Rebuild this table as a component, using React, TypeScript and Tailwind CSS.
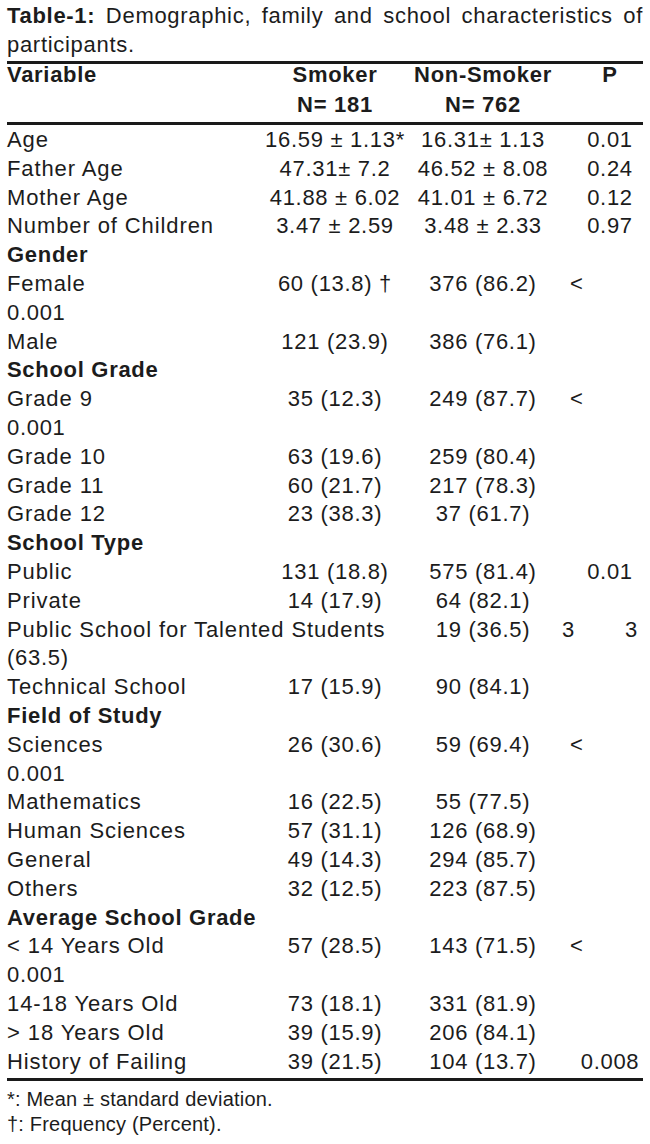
import React from 'react';

type Row =
  | { kind: 'head'; label: string }
  | { kind: 'line'; label: string }
  | { kind: 'data'; label: string; smoker: string; non: string; p?: string; lt?: boolean };

const ROWS: Row[] = [
  { kind: 'data', label: 'Age', smoker: '16.59 ± 1.13*', non: '16.31± 1.13', p: '0.01' },
  { kind: 'data', label: 'Father Age', smoker: '47.31± 7.2', non: '46.52 ± 8.08', p: '0.24' },
  { kind: 'data', label: 'Mother Age', smoker: '41.88 ± 6.02', non: '41.01 ± 6.72', p: '0.12' },
  { kind: 'data', label: 'Number of Children', smoker: '3.47 ± 2.59', non: '3.48 ± 2.33', p: '0.97' },
  { kind: 'head', label: 'Gender' },
  { kind: 'data', label: 'Female', smoker: '60 (13.8) †', non: '376 (86.2)', lt: true },
  { kind: 'line', label: '0.001' },
  { kind: 'data', label: 'Male', smoker: '121 (23.9)', non: '386 (76.1)' },
  { kind: 'head', label: 'School Grade' },
  { kind: 'data', label: 'Grade 9', smoker: '35 (12.3)', non: '249 (87.7)', lt: true },
  { kind: 'line', label: '0.001' },
  { kind: 'data', label: 'Grade 10', smoker: '63 (19.6)', non: '259 (80.4)' },
  { kind: 'data', label: 'Grade 11', smoker: '60 (21.7)', non: '217 (78.3)' },
  { kind: 'data', label: 'Grade 12', smoker: '23 (38.3)', non: '37 (61.7)' },
  { kind: 'head', label: 'School Type' },
  { kind: 'data', label: 'Public', smoker: '131 (18.8)', non: '575 (81.4)', p: '0.01' },
  { kind: 'data', label: 'Private', smoker: '14 (17.9)', non: '64 (82.1)' },
];

const ROWS2: Row[] = [
  { kind: 'line', label: '(63.5)' },
  { kind: 'data', label: 'Technical School', smoker: '17 (15.9)', non: '90 (84.1)' },
  { kind: 'head', label: 'Field of Study' },
  { kind: 'data', label: 'Sciences', smoker: '26 (30.6)', non: '59 (69.4)', lt: true },
  { kind: 'line', label: '0.001' },
  { kind: 'data', label: 'Mathematics', smoker: '16 (22.5)', non: '55 (77.5)' },
  { kind: 'data', label: 'Human Sciences', smoker: '57 (31.1)', non: '126 (68.9)' },
  { kind: 'data', label: 'General', smoker: '49 (14.3)', non: '294 (85.7)' },
  { kind: 'data', label: 'Others', smoker: '32 (12.5)', non: '223 (87.5)' },
  { kind: 'head', label: 'Average School Grade' },
  { kind: 'data', label: '< 14 Years Old', smoker: '57 (28.5)', non: '143 (71.5)', lt: true },
  { kind: 'line', label: '0.001' },
  { kind: 'data', label: '14-18 Years Old', smoker: '73 (18.1)', non: '331 (81.9)' },
  { kind: 'data', label: '> 18 Years Old', smoker: '39 (15.9)', non: '206 (84.1)' },
  { kind: 'data', label: 'History of Failing', smoker: '39 (21.5)', non: '104 (13.7)', p: '0.008' },
];

const grid = 'grid grid-cols-[253px_150px_146px_94px]';

const TableRow: React.FC<{ row: Row }> = ({ row }) => {
  if (row.kind === 'head') {
    return <div className="font-bold whitespace-nowrap">{row.label}</div>;
  }
  if (row.kind === 'line') {
    return <div className="whitespace-nowrap">{row.label}</div>;
  }
  return (
    <div className={grid}>
      <div className="whitespace-nowrap tracking-[0.9px]">{row.label}</div>
      <div className="text-center whitespace-nowrap">{row.smoker}</div>
      <div className="text-center whitespace-nowrap">{row.non}</div>
      <div className={`pl-[14px] whitespace-nowrap ${row.lt ? 'text-left' : 'text-center'}`}>
        {row.lt ? '<' : row.p}
      </div>
    </div>
  );
};

export default function App() {
  return (
    <div
      className="w-[650px] bg-white pl-[7px] pt-px text-[22px] leading-[28.8px] tracking-[0.7px] text-[#1c1c1c]"
      style={{ fontFamily: '"Liberation Sans", Arial, sans-serif' }}
    >
      <div className="pr-[7px] leading-[29px]">
        <div className="text-justify [text-align-last:justify]">
          <b>Table-1:</b> Demographic, family and school characteristics of
        </div>
        <div>participants.</div>
      </div>

      <div className="mt-[2px] h-[3px] w-[636px] bg-[#1a1a1a]" />

      <div className={`${grid} -mt-[4px] font-bold leading-[30px]`}>
        <div>Variable</div>
        <div className="text-center">
          Smoker
          <br />
          N= 181
        </div>
        <div className="text-center">
          Non-Smoker
          <br />
          N= 762
        </div>
        <div className="pl-[14px] text-center">P</div>
      </div>

      <div className="mt-[2px] h-[3px] w-[636px] bg-[#1a1a1a]" />

      <div className="pt-px">
        {ROWS.map((row, i) => (
          <TableRow key={i} row={row} />
        ))}

        {/* this row spills over the smoker column in the source */}
        <div className={grid}>
          <div className="col-span-2 whitespace-nowrap tracking-[0.9px]">Public School for Talented Students</div>
          <div className="text-center whitespace-nowrap">19 (36.5)</div>
          <div className="flex justify-between pl-[6px] pr-[12px]">
            <span>3</span>
            <span>3</span>
          </div>
        </div>

        {ROWS2.map((row, i) => (
          <TableRow key={i} row={row} />
        ))}
      </div>

      <div className="mt-[2px] h-[3px] w-[636px] bg-[#1a1a1a]" />

      <div className="mt-[6px] pb-[8px] text-[20px] leading-[25px] tracking-[0.2px]">
        <div>*: Mean ± standard deviation.</div>
        <div>†: Frequency (Percent).</div>
      </div>
    </div>
  );
}
